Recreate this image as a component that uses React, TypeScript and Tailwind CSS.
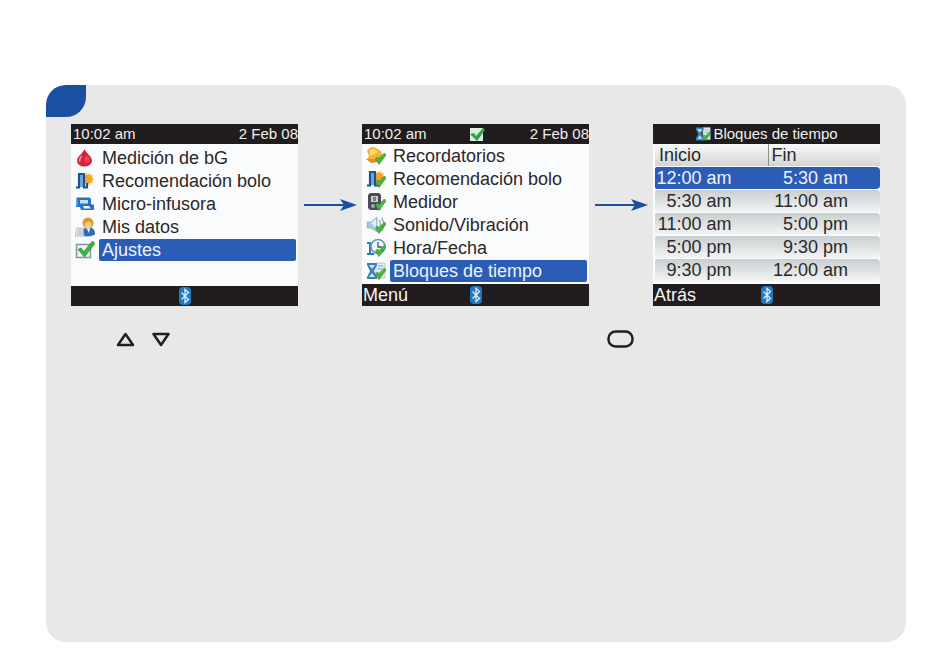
import React from 'react';

interface MenuItem {
  label: string;
  icon: React.ReactNode;
  selected?: boolean;
}

const CheckMark: React.FC = () => (
  <path d="M9.500 13l3.500 5.500L20 9l-1.500-2-5.500 5.500-1.500-1.500z" fill="#4db53f" stroke="#2b8a35" strokeWidth="0.600" />
);

const Icon: React.FC<{ children: React.ReactNode }> = ({ children }) => (
  <svg className="w-5 h-5" viewBox="0 0 20 20" fill="none" aria-hidden="true">{children}</svg>
);

const DropIcon = () => (
  <Icon>
    <path d="M9.500 1C8.500 5 2 8 2 13a7.500 5.500 0 0 0 15 0C17 8 10.500 5 9.500 1z" fill="#d9203a" />
    <ellipse cx="12" cy="11.500" rx="2.500" ry="3.500" fill="#ef4154" />
    <path d="M6.500 8.500C5 10 4.500 11.500 4.500 13" stroke="#f58a94" strokeWidth="1.800" strokeLinecap="round" />
  </Icon>
);

const BolusShape = () => (
  <>
    <path d="M11 2l2 1.500L15 1l.5 3 3-.5-1.500 3L20 8l-3 1.500 1.500 3-3-.5-.5 3-2.500-2z" fill="#f9d27c" />
    <circle cx="13" cy="8" r="4.500" fill="#f3a42c" />
    <path d="M4.500 4h4v12h-4z" fill="#74a9dc" />
    <path d="M1 16.500h3V3h5v13.500h3V12" stroke="#1f4f90" strokeWidth="2.200" />
  </>
);

const BolusIcon = () => (
  <Icon><BolusShape /></Icon>
);

const BolusCheckIcon = () => (
  <Icon>
    <BolusShape />
    <CheckMark />
  </Icon>
);

const PumpIcon = () => (
  <Icon>
    <path d="M1.500 3.500h13L16 5v5l3 1v5H6l-1-3H1z" fill="#2673bd" />
    <path d="M5 6h8v3.500H5z" fill="#c3e0f5" />
    <path d="M8 12h6l2 2.500H9z" fill="#e9f4fc" />
    <path d="M2 5v7" stroke="#64a5dc" strokeWidth="1.500" />
  </Icon>
);

const PersonIcon = () => (
  <Icon>
    <path d="M7 19c0-6 2-9 6-9s7 2 7 7.500c-3 2-8 2.500-13 1.500z" fill="#2d6fb8" />
    <path d="M11.500 11h3.500l-1 5z" fill="#fff" />
    <circle cx="13" cy="6" r="5.500" fill="#d99a2a" />
    <path d="M9.500 6c2 0 3-1 4-2 1 1 2 2 3 2 0 4-1.500 6-3.500 6s-3.500-2-3.500-6z" fill="#f8d08c" />
    <path d="M2 11h6l1 8H0z" fill="#f1f3f5" stroke="#a3acb4" strokeWidth="0.800" />
    <path d="M3 13h4.500M2.500 15h5M2 17h6" stroke="#8c98a3" strokeWidth="0.800" />
  </Icon>
);

const SettingsIcon = () => (
  <Icon>
    <rect x="1.500" y="4.500" width="14" height="13" fill="#eef1f2" stroke="#89959c" strokeWidth="1.500" />
    <path d="M3 9.500L6 8l3 3.500L17.500 1l2.500 2.500L9.500 17z" fill="#3bb241" stroke="#1d8430" strokeWidth="0.600" />
  </Icon>
);

const BellIcon = () => (
  <Icon>
    <path d="M1 5l3-3.500 4-.5 7 4 2 6-3 5L1 13l2-3z" fill="#f5b433" />
    <path d="M4 4l4-1 4 3-8 4z" fill="#ffdc73" />
    <path d="M0 13l5 4 7-1-3-3z" fill="#ec8a2a" />
    <CheckMark />
  </Icon>
);

const MeterIcon = () => (
  <Icon>
    <path d="M4 1h9l2 2v14l-2 1H4l-2-2V3z" fill="#474d52" />
    <path d="M5 4h7v6H5z" fill="#c4cfcd" />
    <path d="M7 5h3v4H7z" fill="#768380" />
    <circle cx="7" cy="14" r="2" fill="#a0a8ad" />
    <CheckMark />
  </Icon>
);

const SoundIcon = () => (
  <Icon>
    <path d="M1 7h4l6-5v15l-6-4H1z" fill="#a5cbe1" stroke="#7ba5bf" strokeWidth="0.600" />
    <path d="M5 8l5-4v9z" fill="#def0fa" />
    <path d="M13 5c2 2 2 6 0 9M15.500 3c3 4 3 9 0 13" stroke="#89b6a6" strokeWidth="1.300" />
    <CheckMark />
  </Icon>
);

const ClockIcon = () => (
  <Icon>
    <path d="M1 5h3v11M1 16h7" stroke="#2d77bd" strokeWidth="2" />
    <circle cx="12" cy="8.500" r="7" fill="#f2f8fb" stroke="#6b9dbd" strokeWidth="1.700" />
    <path d="M12 4v5h4" stroke="#34576f" strokeWidth="1.300" />
    <CheckMark />
  </Icon>
);

const HourglassShape = () => (
  <>
    <path d="M10 2h9v15h-9z" fill="#e2edf3" stroke="#a6bccb" strokeWidth="0.700" />
    <path d="M12 5h5M12 8h5" stroke="#7fa4be" />
    <path d="M1 2h10v2L8 10l3 6v2H1v-2l3-6-3-6z" fill="#3c81b8" />
    <path d="M3 4h6l-3 4zM6 12l3 4H3z" fill="#c8e8f8" />
    <CheckMark />
  </>
);

const HourglassIcon = () => (
  <Icon><HourglassShape /></Icon>
);

const BluetoothIcon: React.FC = () => (
  <svg className="w-3.5 h-[18px]" viewBox="0 0 14 18" fill="none" role="img" aria-label="Bluetooth">
    <rect x="1" width="12" height="18" rx="4" fill="#2377bf" />
    <path d="M3.500 5.500l7 7L7 15.500v-13l3.500 3-7 7" stroke="#d9efff" strokeWidth="1.300" />
  </svg>
);

const Arrow: React.FC = () => (
  <svg className="w-16 h-4 shrink-0 self-start mt-[73px]" viewBox="0 0 64 16" aria-hidden="true">
    <path d="M6 8h40" stroke="#1c4f9f" strokeWidth="2" />
    <path d="M42 2l17 6-17 6 4-6z" fill="#1c4f9f" />
  </svg>
);

const StatusBar: React.FC<{ icon?: React.ReactNode }> = ({ icon }) => (
  <div className="grid grid-cols-[1fr_auto_1fr] items-center h-5 pl-0.5 bg-[#211c1d] text-[#f0f0f0] text-[15px] leading-5 whitespace-nowrap">
    <span>10:02 am</span>
    <span>{icon}</span>
    <span className="text-right">2 Feb 08</span>
  </div>
);

const SoftKeys: React.FC<{ left?: string }> = ({ left }) => (
  <div className="grid grid-cols-[1fr_auto_1fr] items-center min-h-5 px-px bg-[#211c1d] text-[#f4f4f4] text-lg leading-[22px]">
    <div className="flex">{left && <button type="button">{left}</button>}</div>
    <BluetoothIcon />
  </div>
);

const Screen: React.FC<{ children: React.ReactNode }> = ({ children }) => (
  <section className="flex-1 min-w-0 flex flex-col min-h-[182px] bg-[#fafbfc]">{children}</section>
);

const Menu: React.FC<{ items: MenuItem[] }> = ({ items }) => (
  <ul className="flex-1 pb-0.5">
    {items.map((item) => (
      <li key={item.label} className="flex items-center h-[23px] pl-1 pr-0.5">
        {item.icon}
        <button
          type="button"
          className={`flex-1 ml-1 pl-[3px] h-[22px] rounded-xs text-left text-lg leading-[22px] whitespace-nowrap ${item.selected ? 'bg-[#2b5cb6] text-[#eef3ff]' : 'text-[#2b2829]'}`}
        >
          {item.label}
        </button>
      </li>
    ))}
  </ul>
);

const MAIN_MENU: MenuItem[] = [
  { label: 'Medición de bG', icon: <DropIcon /> },
  { label: 'Recomendación bolo', icon: <BolusIcon /> },
  { label: 'Micro-infusora', icon: <PumpIcon /> },
  { label: 'Mis datos', icon: <PersonIcon /> },
  { label: 'Ajustes', icon: <SettingsIcon />, selected: true }
];

const SETTINGS_MENU: MenuItem[] = [
  { label: 'Recordatorios', icon: <BellIcon /> },
  { label: 'Recomendación bolo', icon: <BolusCheckIcon /> },
  { label: 'Medidor', icon: <MeterIcon /> },
  { label: 'Sonido/Vibración', icon: <SoundIcon /> },
  { label: 'Hora/Fecha', icon: <ClockIcon /> },
  { label: 'Bloques de tiempo', icon: <HourglassIcon />, selected: true }
];

const TIME_BLOCKS = [
  { start: '12:00 am', end: '5:30 am' },
  { start: '5:30 am', end: '11:00 am' },
  { start: '11:00 am', end: '5:00 pm' },
  { start: '5:00 pm', end: '9:30 pm' },
  { start: '9:30 pm', end: '12:00 am' }
];

const TimeBlocks: React.FC = () => (
  <div className="flex-1 pl-0.5">
    <table className="w-full -mt-px table-fixed border-separate border-spacing-x-0 border-spacing-y-px text-lg leading-[22px] text-[#2b2829]">
      <thead>
        <tr className="bg-linear-to-b from-[#fafafa] to-[#d2d5d6]">
          <th scope="col" className="p-0 pl-1 font-normal text-left">Inicio</th>
          <th scope="col" className="p-0 font-normal text-left">
            <div className="pl-[3px] border-l border-[#8c8f91]">Fin</div>
          </th>
        </tr>
      </thead>
      <tbody>
        {TIME_BLOCKS.map((block, idx) => (
          <tr key={block.start} className={idx === 0 ? 'text-[#eef3ff]' : ''}>
            <td className={`p-0 pr-9 text-right whitespace-nowrap rounded-l-xs ${idx === 0 ? 'bg-[#2b5cb6]' : 'bg-linear-to-b from-[#c9cfd1] to-[#f3f4f4]'}`}>
              {block.start}
            </td>
            <td className={`p-0 pr-8 text-right whitespace-nowrap rounded-r-sm ${idx === 0 ? 'bg-[#2b5cb6]' : 'bg-linear-to-b from-[#c9cfd1] to-[#f3f4f4]'}`}>
              {block.end}
            </td>
          </tr>
        ))}
      </tbody>
    </table>
  </div>
);

const App: React.FC = () => {
  return (
    <main className="min-h-screen flex flex-col bg-white pt-[85px] pb-[27px] pl-[46px] pr-[44px] font-['Liberation_Sans',Arial,sans-serif]">
      <div className="flex-1 bg-[#e8e8e8] rounded-[20px]">
        <div className="w-10 h-8 bg-[#1b4f9f] rounded-tl-[20px] rounded-br-[20px]" />

        <div className="flex mt-[7px] pl-[25px] pr-[26px]">
          <Screen>
            <StatusBar />
            <div className="flex-1 pt-0.5">
              <Menu items={MAIN_MENU} />
            </div>
            <SoftKeys />
          </Screen>
          <Arrow />
          <Screen>
            <StatusBar
              icon={
                <svg className="w-4 h-4" viewBox="0 0 16 16" aria-hidden="true">
                  <rect x="1" y="2" width="13" height="13" fill="#d9eedf" />
                  <path d="M1 8l4-1 2 3 7-8 2 2-8 11z" fill="#2fa344" />
                </svg>
              }
            />
            <Menu items={SETTINGS_MENU} />
            <SoftKeys left="Menú" />
          </Screen>
          <Arrow />
          <Screen>
            <div className="flex justify-center items-center gap-0.5 h-5 bg-[#211c1d] text-[#f0f0f0] text-[15px] leading-5 whitespace-nowrap">
              <svg className="w-4 h-4" viewBox="0 0 20 20" aria-hidden="true"><HourglassShape /></svg>
              <h2>Bloques de tiempo</h2>
            </div>
            <TimeBlocks />
            <SoftKeys left="Atrás" />
          </Screen>
        </div>

        <div className="flex items-center gap-4 mt-6 ml-[70px] w-[61%] text-[#231f20]">
          <button type="button" aria-label="Arriba">
            <svg className="w-5 h-[18px]" viewBox="0 0 20 18" fill="none" stroke="currentColor" strokeWidth="2.500" strokeLinejoin="round">
              <path d="M9.500 4L17 15H2z" />
            </svg>
          </button>
          <button type="button" aria-label="Abajo">
            <svg className="w-5 h-[18px]" viewBox="0 0 20 18" fill="none" stroke="currentColor" strokeWidth="2.500" strokeLinejoin="round">
              <path d="M9 15L1.500 4h15z" />
            </svg>
          </button>
          <button type="button" aria-label="Aceptar" className="ml-auto">
            <svg className="w-9 h-[18px]" viewBox="0 0 36 18" fill="none" stroke="currentColor" strokeWidth="2.500">
              <rect x="3.500" y="1.500" width="24" height="15" rx="7" />
            </svg>
          </button>
        </div>
      </div>
    </main>
  );
};

export default App;
